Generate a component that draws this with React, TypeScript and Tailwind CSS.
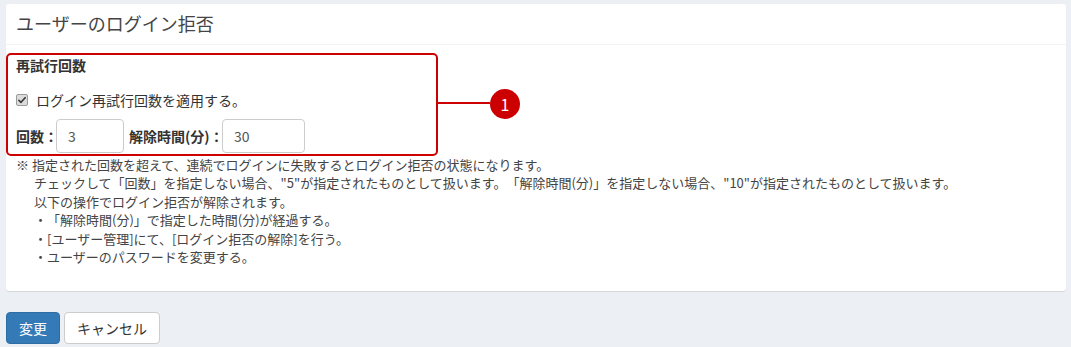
const font = { fontFamily: '"Noto Sans CJK JP", "Noto Sans", sans-serif' };

function CheckMark() {
  return (
    <span className="inline-flex h-[12px] w-[12px] items-center justify-center rounded-[2px] border border-[#9a9a9a] bg-[#dcdcdc]">
      <svg viewBox="0 0 12 12" className="h-[10px] w-[10px]">
        <path d="M2.2 6.3 L4.8 8.8 L9.8 3.2" fill="none" stroke="#333" strokeWidth="1.9" strokeLinecap="round" strokeLinejoin="round" />
      </svg>
    </span>
  );
}

const notes = [
  "チェックして「回数」を指定しない場合、\"5\"が指定されたものとして扱います。「解除時間(分)」を指定しない場合、\"10\"が指定されたものとして扱います。",
  "以下の操作でログイン拒否が解除されます。",
  "・「解除時間(分)」で指定した時間(分)が経過する。",
  "・[ユーザー管理]にて、[ログイン拒否の解除]を行う。",
  "・ユーザーのパスワードを変更する。",
];

export default function App() {
  return (
    <div
      className="min-h-[347px] w-full bg-[#ecf0f5] pl-[6px] pr-[5px] pt-[4px] text-[#333] [text-spacing-trim:space-all]"
      style={font}
    >
      <div className="rounded-[3px] bg-white shadow-[0_1px_1px_rgba(0,0,0,0.1)]">
        <div className="border-b border-[#f4f4f4] px-[10px] pb-[11px] pt-[9px]">
          <h3 className="text-[18px] leading-[20px] font-normal text-[#444]">ユーザーのログイン拒否</h3>
        </div>

        <div className="px-[10px] pb-[25px] pt-[8px]">
          {/* annotated group */}
          <div className="relative -ml-[10px] w-[432px] rounded-[5px] border-2 border-[#cc0000] pb-[1px] pl-[8px]">
            <div className="text-[14px] font-bold leading-[20px]">再試行回数</div>
            <label className="mt-[15px] flex h-[20px] items-center text-[14px] leading-[20px]">
              <CheckMark />
              <span className="ml-[8px]">ログイン再試行回数を適用する。</span>
            </label>
            <div className="mt-[9px] flex items-center text-[14px]">
              <span className="w-[40px] whitespace-nowrap font-bold">回数：</span>
              <input
                readOnly
                value="3"
                className="h-[34px] w-[68px] rounded-[4px] border border-[#ccc] px-[11px] text-[14px] text-[#555] outline-none"
              />
              <span className="ml-[5px] w-[93px] whitespace-nowrap font-bold">解除時間(分)：</span>
              <input
                readOnly
                value="30"
                className="h-[34px] w-[83px] rounded-[4px] border border-[#ccc] px-[11px] text-[14px] text-[#555] outline-none"
              />
            </div>

            <div className="absolute left-[430px] top-[47px] h-[2px] w-[52px] bg-[#cc0000]" />
            <div className="absolute left-[482px] top-[34px] flex h-[30px] w-[30px] items-center justify-center rounded-full bg-[#cc0000] text-[16px] text-white">
              1
            </div>
          </div>

          <div className="pl-[18px] text-[13px] leading-[18.4px] text-[#444]">
            <p className="-indent-[18px]">※ 指定された回数を超えて、連続でログインに失敗するとログイン拒否の状態になります。</p>
            {notes.map((n) => (
              <p key={n}>{n}</p>
            ))}
          </div>
        </div>
      </div>

      <div className="mt-[21px] flex gap-[4px] text-[14px]">
        <button className="h-[32px] rounded-[4px] border border-[#2e6da4] bg-[#337ab7] px-[12px] text-white">変更</button>
        <button className="h-[32px] rounded-[4px] border border-[#ccc] bg-white px-[12px] text-[#333]">キャンセル</button>
      </div>
    </div>
  );
}
